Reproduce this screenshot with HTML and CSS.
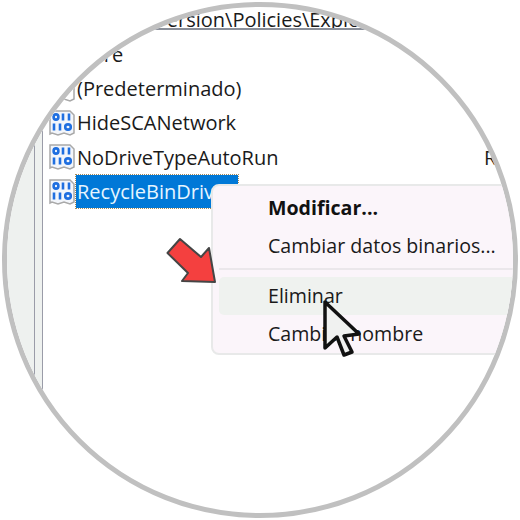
FILE: index.html
```html
<!DOCTYPE html>
<html lang="es">
<head>
  <meta charset="UTF-8">
  <title>Editor del Registro</title>
  <link rel="stylesheet" href="styles.css">
</head>
<body>
  <div class="lens">
    <div class="address"><span>CurrentVersion\Policies\Explorer</span></div>
    <div class="pane">
      <div class="tree"></div>
      <div class="gutter"></div>
      <div class="list">
        <div class="row head">
          <span class="name">Nombre</span>
        </div>
        <div class="row">
          <svg class="icon" viewBox="0 0 28 28"><path d="M2 2h20l4 4v18l-4 2-6-2-6 2-6-2-2 1z" fill="#fff" stroke="#a9a9a9" stroke-width="1.5"/></svg>
          <span class="name">(Predeterminado)</span>
        </div>
        <div class="row">
          <svg class="icon" viewBox="0 0 28 28"><use href="#bin"/></svg>
          <span class="name">HideSCANetwork</span>
        </div>
        <div class="row">
          <svg class="icon" viewBox="0 0 28 28"><use href="#bin"/></svg>
          <span class="name">NoDriveTypeAutoRun</span>
          <span class="value">REG_DWORD</span>
        </div>
        <div class="row">
          <svg class="icon" viewBox="0 0 28 28"><use href="#bin"/></svg>
          <span class="name selected">RecycleBinDrives</span>
        </div>
      </div>
    </div>

    <div class="menu">
      <div class="item bold">Modificar...</div>
      <div class="item">Cambiar datos binarios...</div>
      <div class="sep"></div>
      <div class="item hover">Eliminar</div>
      <div class="item">Cambiar nombre</div>
    </div>

    <svg class="arrow" viewBox="0 0 52 48">
      <path d="M14 2 L1.5 16 L22 36 L16 44 L49 45 L43 11 L35 20 Z" fill="#f4403f" stroke="#454545" stroke-width="2" stroke-linejoin="round"/>
    </svg>
    <svg class="pointer" viewBox="0 0 44 62">
      <path d="M5 4 L5 50 L17 39 L24 57 L32 54 L24 38 L39 36 Z" fill="#f0f1f0" stroke="#111" stroke-width="3.5" stroke-linejoin="round"/>
    </svg>
  </div>

  <svg class="defs" width="0" height="0">
    <symbol id="bin" viewBox="0 0 28 28">
      <path d="M2 2h20l4 4v18l-4 2-6-2-6 2-6-2-2 1z" fill="#f3f6fb" stroke="#a9a9a9" stroke-width="1.5"/>
      <g fill="none" stroke="#1f6fe0" stroke-width="2.6">
        <ellipse cx="8" cy="8" rx="2.4" ry="2.6"/>
        <path d="M15 4.5v7M21 4.5v7"/>
        <path d="M6 14.5v7M12 14.5v7"/>
        <ellipse cx="20" cy="18" rx="2.8" ry="2.6"/>
      </g>
    </symbol>
  </svg>
</body>
</html>
```

FILE: styles.css
```css
body {
  margin: 0;
  background: white;
  font-family: "Open Sans", "Noto Sans", sans-serif;
  color: #1a1a1a;
}
.lens {
  position: relative;
  box-sizing: border-box;
  width: 516px;
  height: 516px;
  margin: 2px;
  border: 5px solid #c0c0c0;
  border-radius: 50%;
  background: white;
  overflow: hidden;
  display: flex;
  flex-direction: column;
  font-size: 20px;
}
.address {
  height: 21px;
  padding-left: 76px;
  border-bottom: 2px solid #8a8f99;
  line-height: 26px;
  white-space: nowrap;
  overflow: hidden;
  flex: none;
}
.pane {
  flex: 1;
  display: flex;
}
.tree {
  width: 27px;
  background: #eef1ef;
  border-right: 1px solid #9a9ca8;
}
.gutter {
  width: 7px;
  background: #eef1ef;
  border-right: 1px solid #9a9ca8;
}
.list {
  padding: 7px 0 0 5px;
  flex: 1;
}
.row {
  height: 34.4px;
  display: flex;
  align-items: center;
  white-space: nowrap;
}
.head {
  margin-left: -3px;
}
.icon {
  width: 28px;
  height: 28px;
  flex: none;
}
.name {
  padding: 0 1px;
  line-height: 33px;
}
.value {
  position: absolute;
  left: 477px;
}
.selected {
  padding-right: 3px;
  background: #0078d7;
  color: #e6f5ff;
  outline: 1px dotted #a58a5a;
}
.menu {
  position: absolute;
  left: 204px;
  top: 177px;
  width: 340px;
  padding: 3px 6px 0;
  background: #fbf5fa;
  border: 2px solid #e8e9e9;
  border-radius: 8px;
  font-size: 19.6px;
}
.item {
  height: 38px;
  line-height: 38px;
  padding-left: 49px;
  border-radius: 5px;
}
.bold {
  font-weight: 700;
  color: #111;
}
.hover {
  background: #eff2ef;
}
.sep {
  height: 2px;
  margin: 3px 0 7px;
  background: #ebe7eb;
}
.arrow {
  position: absolute;
  left: 159px;
  top: 230px;
  width: 52px;
  height: 48px;
}
.pointer {
  position: absolute;
  left: 313px;
  top: 291px;
  width: 44px;
  height: 62px;
}
.defs {
  position: absolute;
}
```
